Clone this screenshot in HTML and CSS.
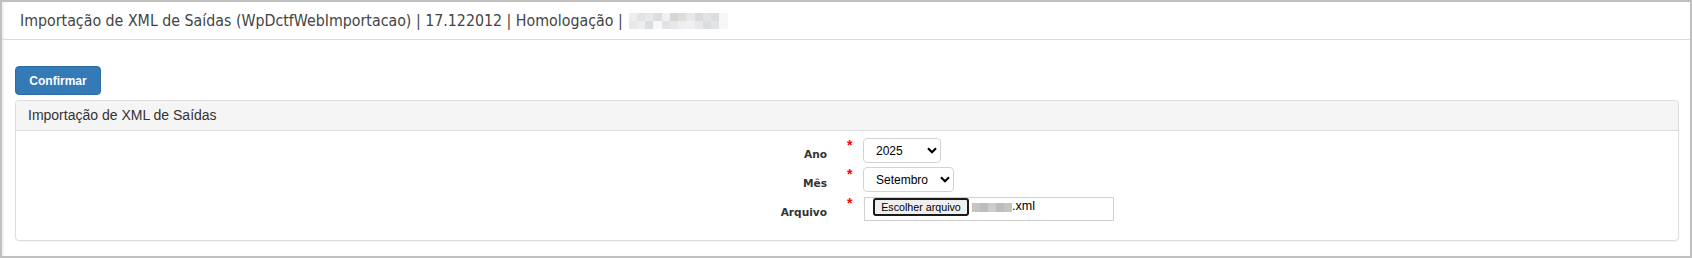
FILE: index.html
```html
<!DOCTYPE html>
<html lang="pt-BR">
<head>
<meta charset="utf-8">
<title>Importação de XML de Saídas</title>
<link rel="stylesheet" href="styles.css">
</head>
<body>
<div class="frame">
  <div class="topbar">
    <span class="title">Importação de XML de Saídas (WpDctfWebImportacao) | 17.122012 | Homologação |</span>
    <span class="mosaic">
      <i class="m1"></i><i class="m2"></i><i class="m3"></i><i class="m4"></i><i class="m5"></i><i class="m6"></i><i class="m7"></i><i class="m3"></i><i class="m8"></i><i class="m2"></i><i class="m4"></i><i class="m9"></i>
      <i class="m3"></i><i class="m1"></i><i class="m4"></i><i class="m9"></i><i class="m2"></i><i class="m3"></i><i class="m1"></i><i class="m5"></i><i class="m3"></i><i class="m4"></i><i class="m2"></i><i class="m9"></i>
    </span>
  </div>
  <div class="content">
    <button class="btn-primary" type="button">Confirmar</button>
    <div class="panel">
      <div class="panel-heading">Importação de XML de Saídas</div>
      <div class="panel-body">
        <div class="form-grid">
          <label class="lbl">Ano</label>
          <span class="req">*</span>
          <div class="ctl">
            <div class="select-wrap w-ano">
              <select class="sel"><option>2025</option></select>
              <svg class="chev" width="10" height="7" viewBox="0 0 10 7"><path d="M1 1.2 L5 5.2 L9 1.2" fill="none" stroke="#000" stroke-width="2.2"/></svg>
            </div>
          </div>

          <label class="lbl">Mês</label>
          <span class="req">*</span>
          <div class="ctl">
            <div class="select-wrap w-mes">
              <select class="sel"><option>Setembro</option></select>
              <svg class="chev" width="10" height="7" viewBox="0 0 10 7"><path d="M1 1.2 L5 5.2 L9 1.2" fill="none" stroke="#000" stroke-width="2.2"/></svg>
            </div>
          </div>

          <label class="lbl">Arquivo</label>
          <span class="req">*</span>
          <div class="ctl">
            <div class="filebox">
              <span class="filebtn">Escolher arquivo</span>
              <span class="fname"><span class="fblur"><i class="b1"></i><i class="b2"></i><i class="b3"></i><i class="b2"></i><i class="b1"></i></span>.xml</span>
            </div>
          </div>
        </div>
      </div>
    </div>
  </div>
</div>
</body>
</html>
```

FILE: styles.css
```css
html, body {
  margin: 0;
  padding: 0;
  background: #fff;
}

.frame {
  width: 1692px;
  height: 258px;
  box-sizing: border-box;
  border: 2px solid #c0c0c0;
  box-shadow: inset 2px 0 2px rgba(0,0,0,0.06);
  background: #fff;
  font-family: "Liberation Sans", Arial, sans-serif;
}

.topbar {
  height: 37px;
  border-bottom: 1px solid #dcdcdc;
  display: flex;
  align-items: center;
  padding-left: 18px;
  gap: 6px;
}

.title {
  font-family: "DejaVu Sans Condensed", "DejaVu Sans", sans-serif;
  font-size: 15.8px;
  color: #444;
}

.mosaic {
  display: grid;
  grid-template-columns: repeat(12, 8.25px);
  grid-template-rows: 8px 8px;
  margin-top: 1px;
}
.mosaic i { display: block; }
.m1 { background: #eceef0; }
.m2 { background: #e2e3e6; }
.m3 { background: #e8e8ea; }
.m4 { background: #dcdde0; }
.m5 { background: #f0f0f0; }
.m6 { background: #d6d6d8; }
.m7 { background: #e0dcd8; }
.m8 { background: #d9dbdf; }
.m9 { background: #f6f7f8; }

.content {
  padding: 26px 11px 0 13px;
}

.btn-primary {
  display: block;
  width: 86px;
  height: 29px;
  box-sizing: border-box;
  background: #337ab7;
  border: 1px solid #2e6da4;
  border-radius: 4px;
  color: #fff;
  font-family: "Liberation Sans", Arial, sans-serif;
  font-weight: bold;
  font-size: 12px;
  padding: 0;
  margin: 0 0 5px 0;
}

.panel {
  border: 1px solid #dddddd;
  border-radius: 4px;
  box-shadow: 0 1px 1px rgba(0,0,0,0.05);
}

.panel-heading {
  height: 30px;
  box-sizing: border-box;
  background: #f5f5f5;
  border-bottom: 1px solid #dddddd;
  border-radius: 3px 3px 0 0;
  padding: 6px 12px 0;
  font-size: 14px;
  color: #333;
  line-height: 17px;
}

.panel-body {
  padding: 7px 0 19px 0;
}

.form-grid {
  display: grid;
  grid-template-columns: 811px 36px 1fr;
  row-gap: 4px;
}

.lbl {
  text-align: right;
  font-family: "DejaVu Sans", sans-serif;
  font-weight: bold;
  font-size: 10.6px;
  color: #333;
  line-height: 14px;
  padding-top: 9px;
}

.req {
  color: #f00;
  font-family: "Liberation Sans", Arial, sans-serif;
  font-size: 14px;
  font-weight: bold;
  line-height: 12px;
  padding-left: 20px;
  padding-top: 1px;
}

.ctl {
  display: flex;
  align-items: flex-start;
}

.select-wrap {
  position: relative;
  height: 25px;
}
.w-ano { width: 78px; }
.w-mes { width: 91px; }

.sel {
  -webkit-appearance: none;
  appearance: none;
  width: 100%;
  height: 25px;
  box-sizing: border-box;
  border: 1px solid #d3d3d3;
  border-radius: 4px;
  background: #fff;
  font-family: "Liberation Sans", Arial, sans-serif;
  font-size: 12px;
  color: #000;
  padding: 0 0 0 12px;
  margin: 0;
}

.chev {
  position: absolute;
  right: 4px;
  top: 9px;
  pointer-events: none;
}

.filebox {
  width: 250px;
  height: 24px;
  box-sizing: border-box;
  border: 1px solid #d0d0d0;
  margin: 1px 0 0 1px;
  display: flex;
  align-items: flex-start;
  padding-left: 8px;
}

.filebtn {
  display: block;
  box-sizing: border-box;
  height: 18px;
  width: 96px;
  border: 2px solid #1a1a1a;
  border-radius: 3px;
  background: #efefef;
  font-family: "Liberation Sans", Arial, sans-serif;
  font-size: 10.7px;
  line-height: 14px;
  text-align: center;
  color: #000;
}

.fname {
  display: flex;
  align-items: center;
  margin-left: 3px;
  font-family: "Liberation Sans", Arial, sans-serif;
  font-size: 12.5px;
  color: #000;
  line-height: 17px;
}

.fblur {
  display: flex;
  height: 9px;
  margin-top: 1px;
}
.fblur i { display: block; height: 9px; width: 8px; }
.b1 { background: #c9c3c3; }
.b2 { background: #bdbdbd; }
.b3 { background: #cfcbcb; }
```
